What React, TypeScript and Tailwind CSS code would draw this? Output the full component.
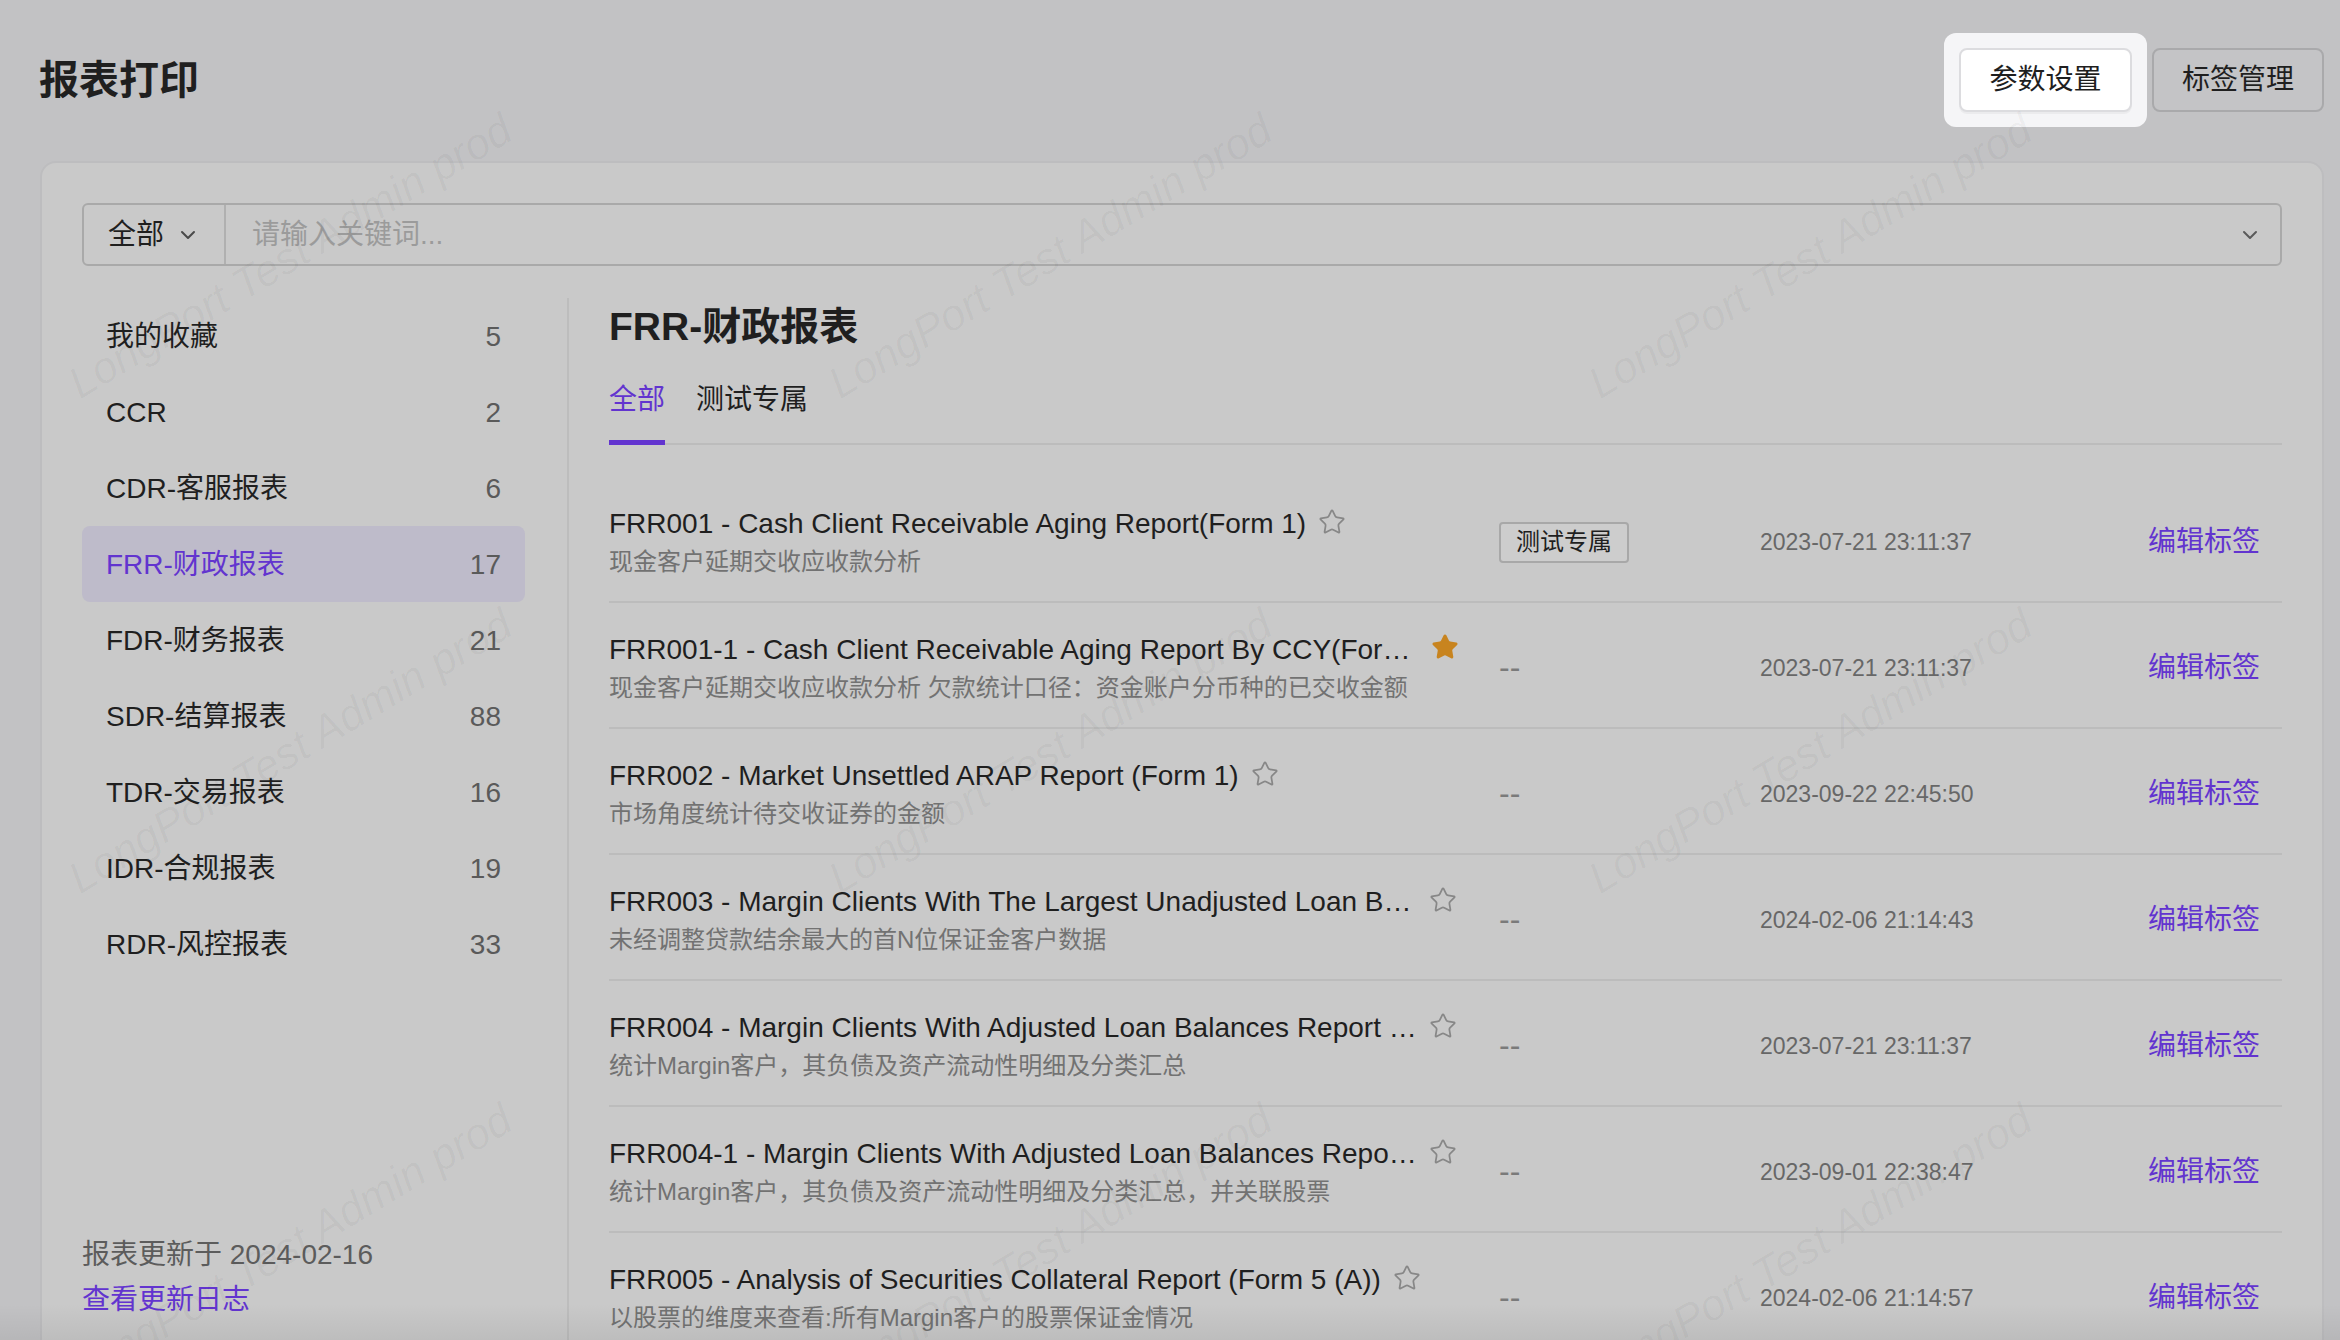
import { ChevronDown, Star } from "lucide-react";

const categories = [
  { name: "我的收藏", count: 5 },
  { name: "CCR", count: 2 },
  { name: "CDR-客服报表", count: 6 },
  { name: "FRR-财政报表", count: 17, active: true },
  { name: "FDR-财务报表", count: 21 },
  { name: "SDR-结算报表", count: 88 },
  { name: "TDR-交易报表", count: 16 },
  { name: "IDR-合规报表", count: 19 },
  { name: "RDR-风控报表", count: 33 },
];

const reports = [
  {
    title: "FRR001 - Cash Client Receivable Aging Report(Form 1)",
    desc: "现金客户延期交收应收款分析",
    tag: "测试专属",
    time: "2023-07-21 23:11:37",
  },
  {
    title: "FRR001-1 - Cash Client Receivable Aging Report By CCY(Form 1)",
    desc: "现金客户延期交收应收款分析 欠款统计口径：资金账户分币种的已交收金额",
    time: "2023-07-21 23:11:37",
    starred: true,
  },
  {
    title: "FRR002 - Market Unsettled ARAP Report (Form 1)",
    desc: "市场角度统计待交收证券的金额",
    time: "2023-09-22 22:45:50",
  },
  {
    title: "FRR003 - Margin Clients With The Largest Unadjusted Loan Balances (Form 3)",
    desc: "未经调整贷款结余最大的首N位保证金客户数据",
    time: "2024-02-06 21:14:43",
  },
  {
    title: "FRR004 - Margin Clients With Adjusted Loan Balances Report (Form 4)",
    desc: "统计Margin客户，其负债及资产流动性明细及分类汇总",
    time: "2023-07-21 23:11:37",
  },
  {
    title: "FRR004-1 - Margin Clients With Adjusted Loan Balances Report By Stock",
    desc: "统计Margin客户，其负债及资产流动性明细及分类汇总，并关联股票",
    time: "2023-09-01 22:38:47",
  },
  {
    title: "FRR005 - Analysis of Securities Collateral Report (Form 5 (A))",
    desc: "以股票的维度来查看:所有Margin客户的股票保证金情况",
    time: "2024-02-06 21:14:57",
  },
];

const Watermark = () => (
  <div className="pointer-events-none absolute left-[-90px] top-[8px] grid h-[1485px] w-[2280px] grid-cols-3 grid-rows-3" aria-hidden>
    {Array.from({ length: 9 }).map((_, i) => (
      <div key={i} className="flex items-center justify-center">
        <span className="-rotate-[31deg] whitespace-nowrap text-[44px] italic text-black/[0.035]">
          LongPort Test Admin prod
        </span>
      </div>
    ))}
  </div>
);

const App = () => {
  return (
    <div className="relative h-[1340px] w-[2340px] overflow-hidden bg-[#c2c2c4] font-['Liberation_Sans','Noto_Sans_CJK_SC',sans-serif] text-[#1f1f1f]">
      <header className="flex h-[161px] items-center justify-between pl-[39px] pr-[16px] pb-[2px]">
        <h1 className="text-[40px] font-bold leading-none">报表打印</h1>
        <div className="flex items-center gap-[20px]">
          <div className="relative">
            <div className="absolute -inset-x-[15px] -inset-y-[15px] rounded-[12px] bg-[#f5f5f7]" />
            <button className="relative h-[64px] w-[173px] rounded-[8px] border-2 border-[#dcdcdf] bg-white text-[28px] shadow-[0_2px_0_rgba(0,0,0,0.04)]">
              参数设置
            </button>
          </div>
          <button className="h-[64px] w-[172px] rounded-[8px] border-2 border-[#a9a9ab] bg-[#c4c4c6] text-[28px]">
            标签管理
          </button>
        </div>
      </header>

      <div className="ml-[40px] mr-[16px] h-[1240px] rounded-[16px] border-2 border-[#bdbdbf] bg-[#c9c9c9] px-[40px] pt-[40px]">
        <div className="flex h-[63px] rounded-[6px] border-2 border-[#a9a9a9]">
          <div className="flex w-[142px] items-center gap-[12px] border-r-2 border-[#b0b0b0] pl-[24px]">
            <span className="text-[28px]">全部</span>
            <ChevronDown className="h-[24px] w-[24px] text-[#4a4a4a]" strokeWidth={2} />
          </div>
          <div className="flex flex-1 items-center justify-between pl-[26px] pr-[18px]">
            <span className="text-[28px] text-[#9b9b9b]">请输入关键词...</span>
            <ChevronDown className="h-[24px] w-[24px] text-[#5a5a5a]" strokeWidth={2} />
          </div>
        </div>

        <div className="mt-[32px] flex h-[1100px]">
          <aside className="flex w-[487px] flex-col border-r-2 border-[#bdbdbd] pr-[42px]">
            <ul>
              {categories.map((c) => (
                <li
                  key={c.name}
                  className={`flex h-[76px] items-center justify-between rounded-[8px] px-[24px] pt-[2px] text-[28px] ${
                    c.active ? "bg-[#bebbca] text-[#6234cf]" : ""
                  }`}
                >
                  <span>{c.name}</span>
                  <span className="text-[#5a5a5a]">{c.count}</span>
                </li>
              ))}
            </ul>
            <div className="mt-auto pb-[76px] text-[28px] leading-[45px]">
              <p className="text-[#5c5c5c]">报表更新于 2024-02-16</p>
              <p className="text-[#6234cf]">查看更新日志</p>
            </div>
          </aside>

          <section className="flex-1 pl-[40px]">
            <h2 className="text-[39px] font-bold leading-[58px]">FRR-财政报表</h2>
            <div className="flex gap-[31px] border-b-2 border-[#bcbcbc] text-[28px]">
              <div className="relative pb-[25px] pt-[26px] leading-[36px] text-[#6234cf]">
                全部
                <span className="absolute bottom-[-2px] left-0 h-[5px] w-full bg-[#6234cf]" />
              </div>
              <div className="pb-[25px] pt-[26px] leading-[36px]">测试专属</div>
            </div>

            <div className="mt-[32px]">
              {reports.map((r) => (
                <div key={r.title} className="flex h-[126px] items-center border-b-2 border-[#bcbcbc] pt-[6px]">
                  <div className="w-[890px]">
                    <div className="flex items-center">
                      <span className="max-w-[808px] truncate text-[28px] leading-[36px]">{r.title}</span>
                      {r.starred ? (
                        <Star className="ml-[14px] h-[28px] w-[28px] shrink-0 -translate-y-[3px] fill-[#c8841f] text-[#c8841f]" strokeWidth={1.5} />
                      ) : (
                        <Star className="ml-[12px] h-[28px] w-[28px] shrink-0 -translate-y-[2px] text-[#878787]" strokeWidth={1.5} />
                      )}
                    </div>
                    <p className="mt-[3px] text-[24px] leading-[34px] text-[#727272]">{r.desc}</p>
                  </div>
                  <div className="w-[261px]">
                    {r.tag ? (
                      <span className="inline-flex h-[41px] items-center rounded-[4px] border-2 border-[#a8a8a8] bg-[#cdcdcd] px-[15px] text-[24px]">
                        {r.tag}
                      </span>
                    ) : (
                      <span className="text-[32px] leading-none text-[#7a7a7a]">--</span>
                    )}
                  </div>
                  <div className="w-[388px] text-[23px] text-[#676767]">{r.time}</div>
                  <div className="text-[28px] text-[#6234cf]">编辑标签</div>
                </div>
              ))}
            </div>
          </section>
        </div>
      </div>

      <div className="pointer-events-none absolute inset-x-0 bottom-0 h-[36px] bg-gradient-to-b from-transparent to-black/[0.06]" />
      <Watermark />
    </div>
  );
};

export default App;
